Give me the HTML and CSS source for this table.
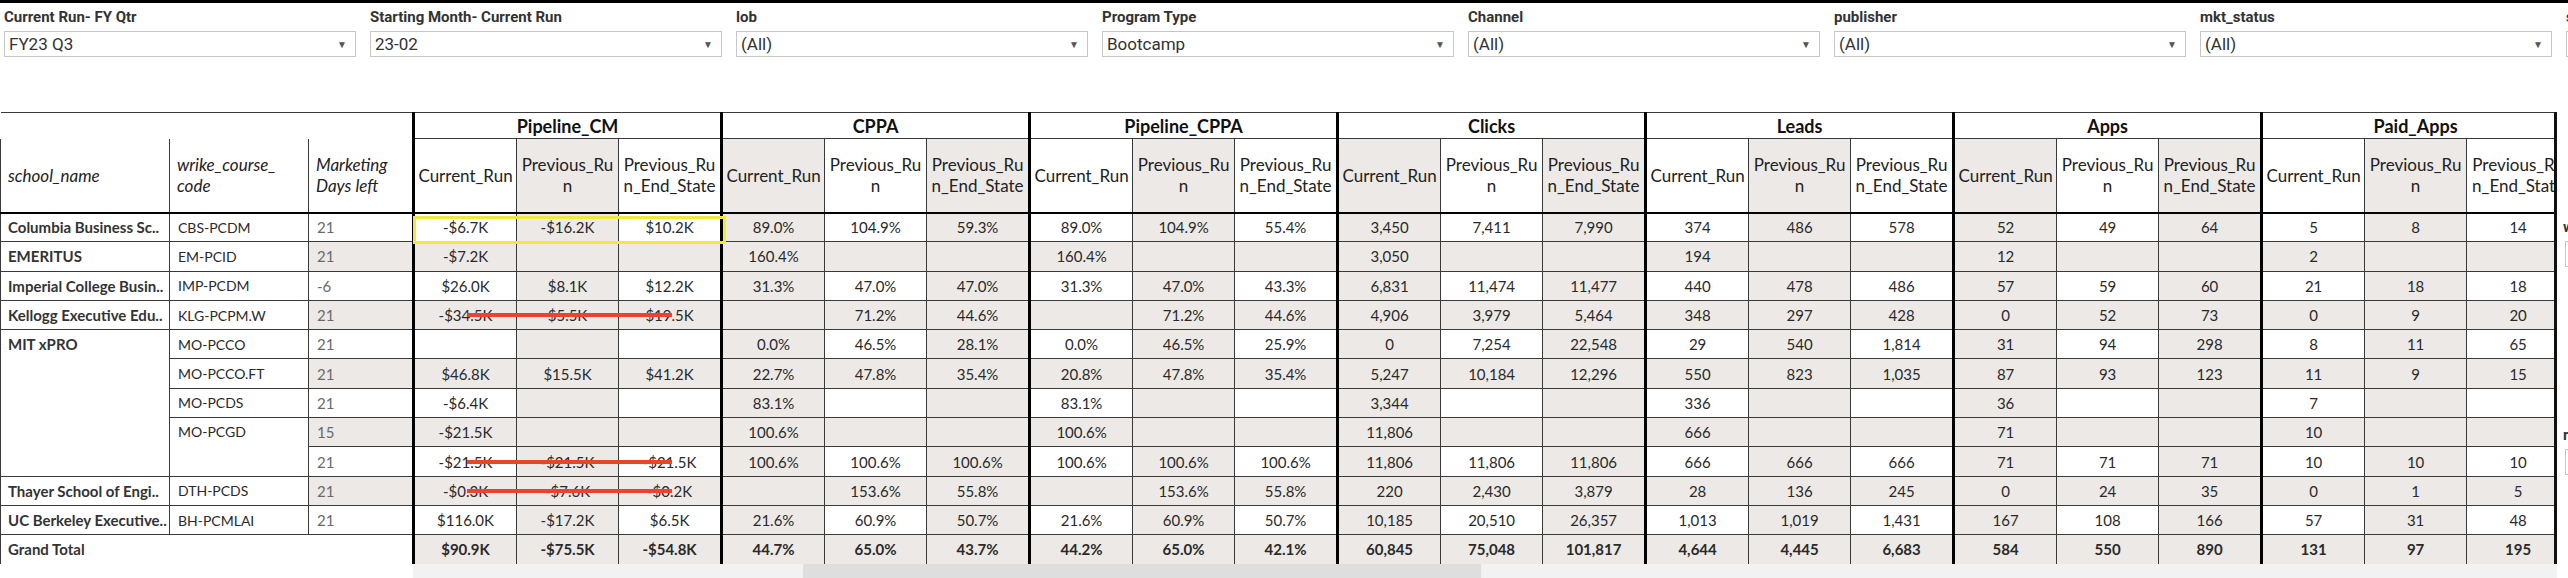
FILE: index.html
```html
<!DOCTYPE html>
<html>
<head>
<meta charset="utf-8">
<link rel="stylesheet" href="styles.css">
</head>
<body>
<div class="topbar"></div>
<div class="filters">
  <div class="filter"><div class="flabel">Current Run- FY Qtr</div><div class="fbox"><span>FY23 Q3</span><span class="arrow">&#9660;</span></div></div>
  <div class="filter"><div class="flabel">Starting Month- Current Run</div><div class="fbox"><span>23-02</span><span class="arrow">&#9660;</span></div></div>
  <div class="filter"><div class="flabel">lob</div><div class="fbox"><span>(All)</span><span class="arrow">&#9660;</span></div></div>
  <div class="filter"><div class="flabel">Program Type</div><div class="fbox"><span>Bootcamp</span><span class="arrow">&#9660;</span></div></div>
  <div class="filter"><div class="flabel">Channel</div><div class="fbox"><span>(All)</span><span class="arrow">&#9660;</span></div></div>
  <div class="filter"><div class="flabel">publisher</div><div class="fbox"><span>(All)</span><span class="arrow">&#9660;</span></div></div>
  <div class="filter"><div class="flabel">mkt_status</div><div class="fbox"><span>(All)</span><span class="arrow">&#9660;</span></div></div>
  <div class="filter"><div class="flabel">school_name</div><div class="fbox"><span>(All)</span><span class="arrow">&#9660;</span></div></div>
</div>
<div class="main">
  <div class="sheet">
    <div class="viewport">
      <table class="grid">
        <colgroup>
          <col class="w-school"><col class="w-code"><col class="w-days">
          <col class="w-a"><col class="w-b"><col class="w-a">
          <col class="w-a"><col class="w-b"><col class="w-a">
          <col class="w-a"><col class="w-b"><col class="w-a">
          <col class="w-a"><col class="w-b"><col class="w-a">
          <col class="w-a"><col class="w-b"><col class="w-a">
          <col class="w-a"><col class="w-b"><col class="w-a">
          <col class="w-a"><col class="w-b"><col class="w-a">
        </colgroup>
        <thead>
          <tr class="groups">
            <th colspan="3" class="corner"></th>
            <th colspan="3">Pipeline_CM</th>
            <th colspan="3">CPPA</th>
            <th colspan="3">Pipeline_CPPA</th>
            <th colspan="3">Clicks</th>
            <th colspan="3">Leads</th>
            <th colspan="3">Apps</th>
            <th colspan="3">Paid_Apps</th>
          </tr>
          <tr class="subs">
            <th class="lh">school_name</th>
            <th class="lh">wrike_course_<br>code</th>
            <th class="lh">Marketing<br>Days left</th>
            <th>Current_Run</th><th>Previous_Ru<br>n</th><th>Previous_Ru<br>n_End_State</th>
            <th>Current_Run</th><th>Previous_Ru<br>n</th><th>Previous_Ru<br>n_End_State</th>
            <th>Current_Run</th><th>Previous_Ru<br>n</th><th>Previous_Ru<br>n_End_State</th>
            <th>Current_Run</th><th>Previous_Ru<br>n</th><th>Previous_Ru<br>n_End_State</th>
            <th>Current_Run</th><th>Previous_Ru<br>n</th><th>Previous_Ru<br>n_End_State</th>
            <th>Current_Run</th><th>Previous_Ru<br>n</th><th>Previous_Ru<br>n_End_State</th>
            <th>Current_Run</th><th>Previous_Ru<br>n</th><th>Previous_Ru<br>n_End_State</th>
          </tr>
        </thead>
        <tbody>
          <tr>
            <td class="school">Columbia Business Sc..</td><td class="code">CBS-PCDM</td><td class="days">21</td>
            <td class="rel">-$6.7K<span class="hl"></span></td><td>-$16.2K</td><td>$10.2K</td>
            <td>89.0%</td><td>104.9%</td><td>59.3%</td>
            <td>89.0%</td><td>104.9%</td><td>55.4%</td>
            <td>3,450</td><td>7,411</td><td>7,990</td>
            <td>374</td><td>486</td><td>578</td>
            <td>52</td><td>49</td><td>64</td>
            <td>5</td><td>8</td><td>14</td>
          </tr>
          <tr class="band">
            <td class="school">EMERITUS</td><td class="code">EM-PCID</td><td class="days">21</td>
            <td>-$7.2K</td><td></td><td></td>
            <td>160.4%</td><td></td><td></td>
            <td>160.4%</td><td></td><td></td>
            <td>3,050</td><td></td><td></td>
            <td>194</td><td></td><td></td>
            <td>12</td><td></td><td></td>
            <td>2</td><td></td><td></td>
          </tr>
          <tr>
            <td class="school">Imperial College Busin..</td><td class="code">IMP-PCDM</td><td class="days">-6</td>
            <td>$26.0K</td><td>$8.1K</td><td>$12.2K</td>
            <td>31.3%</td><td>47.0%</td><td>47.0%</td>
            <td>31.3%</td><td>47.0%</td><td>43.3%</td>
            <td>6,831</td><td>11,474</td><td>11,477</td>
            <td>440</td><td>478</td><td>486</td>
            <td>57</td><td>59</td><td>60</td>
            <td>21</td><td>18</td><td>18</td>
          </tr>
          <tr class="band">
            <td class="school">Kellogg Executive Edu..</td><td class="code">KLG-PCPM.W</td><td class="days">21</td>
            <td class="rel">-$34.5K<span class="strike"></span></td><td>$5.5K</td><td>$19.5K</td>
            <td></td><td>71.2%</td><td>44.6%</td>
            <td></td><td>71.2%</td><td>44.6%</td>
            <td>4,906</td><td>3,979</td><td>5,464</td>
            <td>348</td><td>297</td><td>428</td>
            <td>0</td><td>52</td><td>73</td>
            <td>0</td><td>9</td><td>20</td>
          </tr>
          <tr>
            <td class="school top" rowspan="5">MIT xPRO</td><td class="code">MO-PCCO</td><td class="days">21</td>
            <td></td><td></td><td></td>
            <td>0.0%</td><td>46.5%</td><td>28.1%</td>
            <td>0.0%</td><td>46.5%</td><td>25.9%</td>
            <td>0</td><td>7,254</td><td>22,548</td>
            <td>29</td><td>540</td><td>1,814</td>
            <td>31</td><td>94</td><td>298</td>
            <td>8</td><td>11</td><td>65</td>
          </tr>
          <tr class="band">
            <td class="code">MO-PCCO.FT</td><td class="days">21</td>
            <td>$46.8K</td><td>$15.5K</td><td>$41.2K</td>
            <td>22.7%</td><td>47.8%</td><td>35.4%</td>
            <td>20.8%</td><td>47.8%</td><td>35.4%</td>
            <td>5,247</td><td>10,184</td><td>12,296</td>
            <td>550</td><td>823</td><td>1,035</td>
            <td>87</td><td>93</td><td>123</td>
            <td>11</td><td>9</td><td>15</td>
          </tr>
          <tr>
            <td class="code">MO-PCDS</td><td class="days">21</td>
            <td>-$6.4K</td><td></td><td></td>
            <td>83.1%</td><td></td><td></td>
            <td>83.1%</td><td></td><td></td>
            <td>3,344</td><td></td><td></td>
            <td>336</td><td></td><td></td>
            <td>36</td><td></td><td></td>
            <td>7</td><td></td><td></td>
          </tr>
          <tr class="band">
            <td class="code top" rowspan="2">MO-PCGD</td><td class="days">15</td>
            <td>-$21.5K</td><td></td><td></td>
            <td>100.6%</td><td></td><td></td>
            <td>100.6%</td><td></td><td></td>
            <td>11,806</td><td></td><td></td>
            <td>666</td><td></td><td></td>
            <td>71</td><td></td><td></td>
            <td>10</td><td></td><td></td>
          </tr>
          <tr>
            <td class="days">21</td>
            <td class="rel">-$21.5K<span class="strike"></span></td><td>-$21.5K</td><td>-$21.5K</td>
            <td>100.6%</td><td>100.6%</td><td>100.6%</td>
            <td>100.6%</td><td>100.6%</td><td>100.6%</td>
            <td>11,806</td><td>11,806</td><td>11,806</td>
            <td>666</td><td>666</td><td>666</td>
            <td>71</td><td>71</td><td>71</td>
            <td>10</td><td>10</td><td>10</td>
          </tr>
          <tr class="band">
            <td class="school">Thayer School of Engi..</td><td class="code">DTH-PCDS</td><td class="days">21</td>
            <td class="rel">-$0.3K<span class="strike"></span></td><td>-$7.6K</td><td>-$0.2K</td>
            <td></td><td>153.6%</td><td>55.8%</td>
            <td></td><td>153.6%</td><td>55.8%</td>
            <td>220</td><td>2,430</td><td>3,879</td>
            <td>28</td><td>136</td><td>245</td>
            <td>0</td><td>24</td><td>35</td>
            <td>0</td><td>1</td><td>5</td>
          </tr>
          <tr>
            <td class="school">UC Berkeley Executive..</td><td class="code">BH-PCMLAI</td><td class="days">21</td>
            <td>$116.0K</td><td>-$17.2K</td><td>$6.5K</td>
            <td>21.6%</td><td>60.9%</td><td>50.7%</td>
            <td>21.6%</td><td>60.9%</td><td>50.7%</td>
            <td>10,185</td><td>20,510</td><td>26,357</td>
            <td>1,013</td><td>1,019</td><td>1,431</td>
            <td>167</td><td>108</td><td>166</td>
            <td>57</td><td>31</td><td>48</td>
          </tr>
          <tr class="band total">
            <td class="school gt" colspan="3">Grand Total</td>
            <td>$90.9K</td><td>-$75.5K</td><td>-$54.8K</td>
            <td>44.7%</td><td>65.0%</td><td>43.7%</td>
            <td>44.2%</td><td>65.0%</td><td>42.1%</td>
            <td>60,845</td><td>75,048</td><td>101,817</td>
            <td>4,644</td><td>4,445</td><td>6,683</td>
            <td>584</td><td>550</td><td>890</td>
            <td>131</td><td>97</td><td>195</td>
          </tr>
        </tbody>
      </table>
    </div>
    <div class="hscroll">
      <div class="hpad"></div>
      <div class="track"><div class="thumb"></div></div>
    </div>
  </div>
  <div class="side">
    <div class="sfilter first"><div class="flabel">wrike_course_code</div><div class="fbox"><span>(All)</span></div></div>
    <div class="sfilter second"><div class="flabel">region</div><div class="fbox"><span>(All)</span></div></div>
  </div>
</div>
</body>
</html>
```

FILE: styles.css
```css
* { box-sizing: border-box; }
html, body { margin: 0; padding: 0; background: #fff; overflow: hidden; }
body {
  width: 2568px;
  height: 578px;
  font-family: Lato, "Liberation Sans", sans-serif;
  color: #222;
}

.topbar { height: 3px; background: #000; }

.filters {
  display: flex;
  gap: 14px;
  padding-left: 4px;
  white-space: nowrap;
}
.filter { flex: 0 0 352px; }
.flabel {
  font-family: Roboto, "Liberation Sans", sans-serif;
  font-weight: 700;
  font-size: 15px;
  line-height: 28px;
  color: #333;
  white-space: nowrap;
}
.fbox {
  height: 26px;
  border: 1px solid #c6c6c6;
  background: #fff;
  display: flex;
  align-items: center;
  justify-content: space-between;
  padding: 0 8px 0 4px;
  font-family: Roboto, "Liberation Sans", sans-serif;
  font-size: 17px;
  color: #333;
  white-space: nowrap;
}
.arrow { font-size: 10px; color: #555; }

.main { display: flex; align-items: flex-start; margin-top: 55px; }
.sheet { flex: 0 0 2557px; }
.viewport {
  width: 2557px;
  height: 452px;
  overflow: hidden;
  border-right: 3px solid #111;
}

.grid {
  border-collapse: collapse;
  table-layout: fixed;
  width: 2569px;
}
.w-school { width: 169px; }
.w-code { width: 139px; }
.w-days { width: 105px; }
.w-a { width: 103px; }
.w-b { width: 102px; }

.grid th, .grid td {
  border: 1px solid #3a3a3a;
  padding: 0 4px;
  text-align: center;
  vertical-align: middle;
  overflow: hidden;
  white-space: nowrap;
}

/* group header row */
.groups { height: 26px; }
.groups th {
  font-weight: 700;
  font-size: 18px;
  color: #111;
  border-left: 3px solid #000;
  border-right: 3px solid #000;
  line-height: 22px;
}
.groups th.corner { border-left: none; border-bottom: none; }

/* sub header row */
.subs { height: 74px; }
.subs th {
  font-weight: 400;
  font-size: 17px;
  line-height: 21px;
  color: #222;
  border-bottom: 2px solid #000;
  padding: 0 1px;
}
.subs th.lh {
  border-top: none;
  font-style: italic;
  text-align: left;
  padding-left: 7px;
}
.subs th:nth-last-child(-n+21):nth-last-child(even) { background: #ece9e6; }
.subs th:nth-last-child(-n+21):nth-last-child(3n),
.grid tbody td:nth-last-child(-n+21):nth-last-child(3n) { border-left: 3px solid #000; }

/* body rows */
.grid tbody tr { height: 29.3px; }
.grid tbody td {
  font-size: 15px;
  color: #2a2a2a;
}
.grid tbody td:nth-last-child(-n+21):nth-last-child(even) { background: #ece9e6; }
.grid tbody tr.band td:nth-last-child(-n+21),
.grid tbody tr.band td.days { background: #ece9e6; }

.grid td.school {
  text-align: left;
  font-weight: 700;
  font-size: 15px;
  color: #333;
  padding-left: 7px;
  background: #fff;
}
.grid td.top { vertical-align: top; padding-top: 5px; }
.grid td.code {
  text-align: left;
  font-size: 14px;
  padding-left: 8px;
  background: #fff;
}
.grid td.days {
  text-align: left;
  font-size: 15px;
  color: #6a6a6a;
  padding-left: 8px;
}
.grid tr.total td { font-weight: 700; }
.grid tr.total td.gt { background: #fff; }

/* annotations over the table */
.grid td.rel { position: relative; overflow: visible; }
.hl {
  position: absolute;
  left: -2px;
  top: 2px;
  width: 313px;
  height: 28px;
  border: 3px solid #f3e93c;
}
.strike {
  position: absolute;
  left: 52px;
  top: 50%;
  margin-top: -2px;
  width: 205px;
  height: 4px;
  background: #e8452c;
}

/* horizontal scrollbar */
.hscroll { display: flex; height: 14px; }
.hpad { flex: 0 0 413px; }
.track { flex: 1; background: #f2f2f2; }
.thumb { margin-left: 390px; width: 678px; height: 100%; background: #dedede; }

/* side filter panel (cut off at the window edge) */
.side { flex: 0 0 200px; margin-left: 6px; }
.sfilter .fbox { margin-left: 2px; }
.sfilter.first { margin-top: 101px; }
.sfilter.second { margin-top: 154px; }
```
